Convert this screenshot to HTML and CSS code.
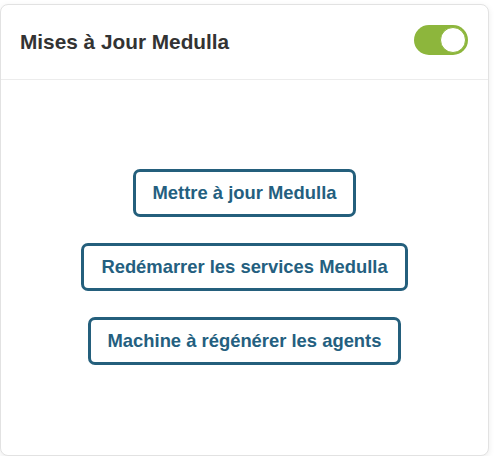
FILE: index.html
```html
<!DOCTYPE html>
<html lang="fr">
<head>
<meta charset="utf-8">
<link rel="stylesheet" href="styles.css">
</head>
<body>
<div class="card">
  <div class="card-header">
    <h2 class="title">Mises à Jour Medulla</h2>
    <label class="switch">
      <span class="knob"></span>
    </label>
  </div>
  <div class="card-body">
    <button class="btn">Mettre à jour Medulla</button>
    <button class="btn">Redémarrer les services Medulla</button>
    <button class="btn">Machine à régénérer les agents</button>
  </div>
</div>
</body>
</html>
```
FILE: styles.css
```css
html, body {
  margin: 0;
  padding: 0;
  background: #ffffff;
}
body {
  font-family: "Liberation Sans", Arial, sans-serif;
  padding-top: 4px;
}
.card {
  width: 489px;
  height: 452px;
  border: 1px solid #e2e2e2;
  border-radius: 8px;
  background: #fff;
  box-shadow: 0 2px 6px rgba(0,0,0,0.08);
  display: flex;
  flex-direction: column;
  box-sizing: border-box;
}
.card-header {
  height: 75px;
  border-bottom: 1px solid #ececec;
  display: flex;
  align-items: center;
  justify-content: space-between;
  padding: 0 20px 0 19px;
  box-sizing: border-box;
}
.title {
  margin: 0;
  font-size: 20.8px;
  font-weight: bold;
  color: #333333;
}
.switch {
  width: 54px;
  height: 30px;
  border-radius: 15px;
  background: #8db63c;
  display: flex;
  align-items: center;
  justify-content: flex-end;
  padding: 2px;
  box-sizing: border-box;
  margin-top: -4px;
}
.knob {
  width: 26px;
  height: 26px;
  border-radius: 50%;
  background: #fff;
  border: 1px solid #8db63c;
  box-sizing: border-box;
}
.card-body {
  flex: 1;
  display: flex;
  flex-direction: column;
  align-items: center;
  justify-content: center;
  gap: 26px;
  padding-bottom: 2px;
}
.btn {
  font-family: "Liberation Sans", Arial, sans-serif;
  font-size: 18.4px;
  font-weight: bold;
  line-height: 20px;
  color: #245f80;
  background: #fff;
  border: 3px solid #245f7c;
  border-radius: 7px;
  padding: 11px 17px;
  cursor: pointer;
}
```
